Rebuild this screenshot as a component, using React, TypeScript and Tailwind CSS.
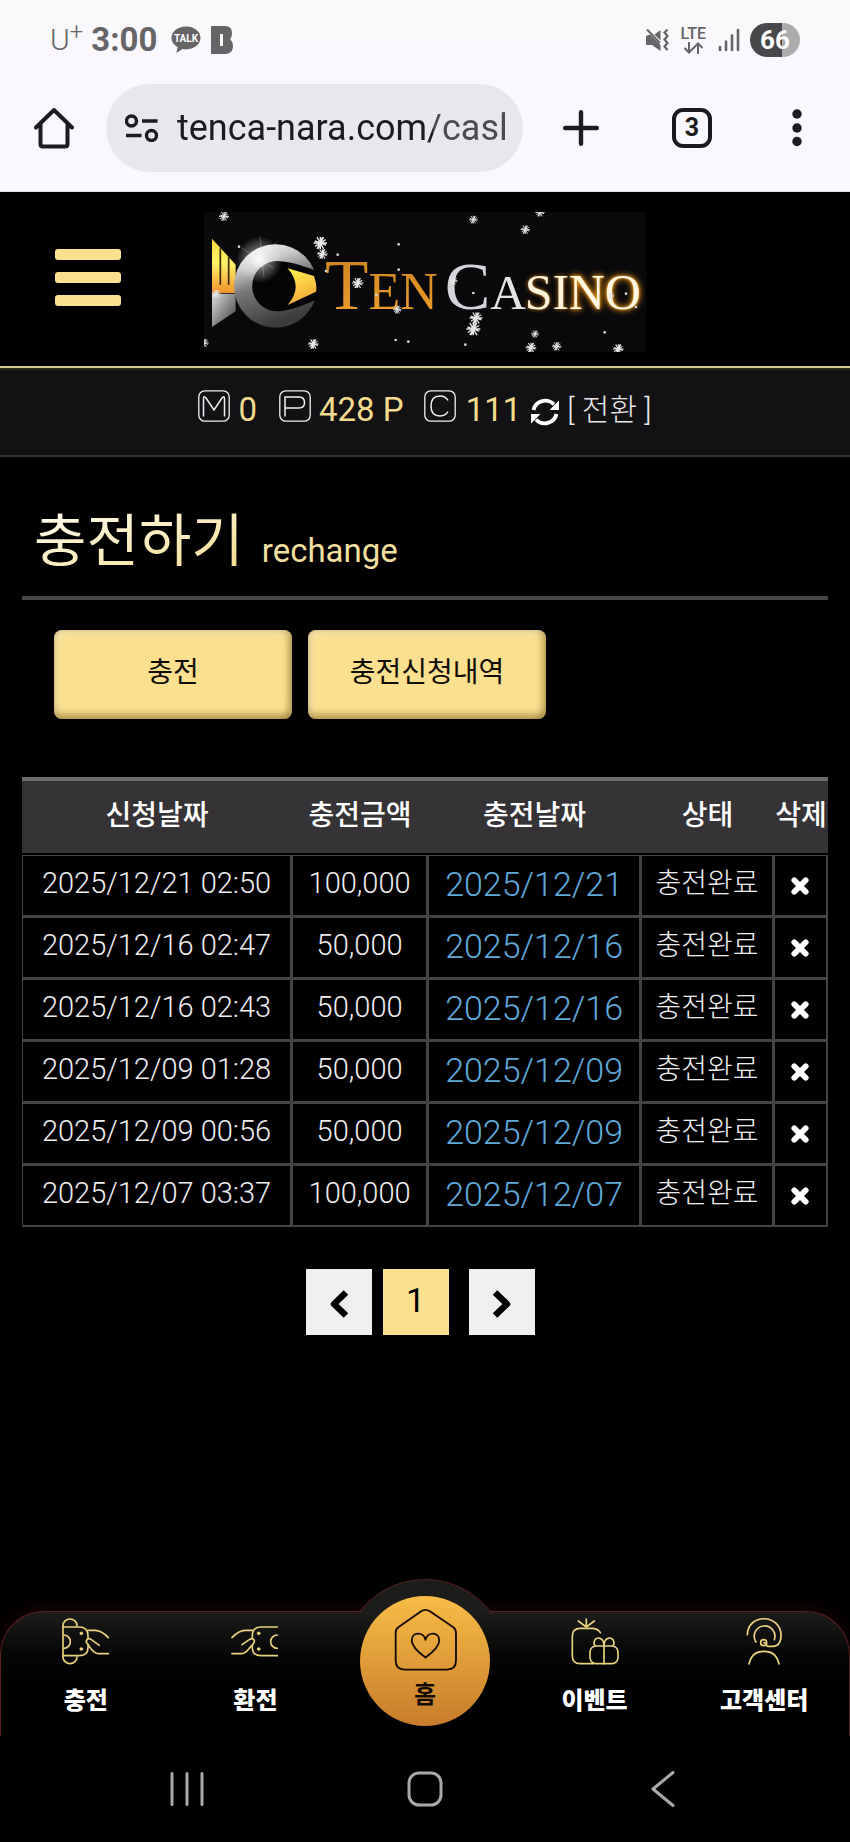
import type { ReactNode } from "react";

const requests = [
  { requested: "2025/12/21 02:50", amount: "100,000", charged: "2025/12/21" },
  { requested: "2025/12/16 02:47", amount: "50,000", charged: "2025/12/16" },
  { requested: "2025/12/16 02:43", amount: "50,000", charged: "2025/12/16" },
  { requested: "2025/12/09 01:28", amount: "50,000", charged: "2025/12/09" },
  { requested: "2025/12/09 00:56", amount: "50,000", charged: "2025/12/09" },
  { requested: "2025/12/07 03:37", amount: "100,000", charged: "2025/12/07" },
];

function StatusBar() {
  return (
    <div className="flex h-[84px] items-center justify-between px-[50px] pb-1 text-[#666467]">
      <div className="flex items-center">
        <span className="flex text-[30px] leading-8 font-light">
          U<span className="-mt-2 text-[24px]">+</span>
        </span>
        <span className="ml-2 text-[33px] leading-8 font-bold">3:00</span>
        <svg viewBox="0 0 30 28" className="ml-3.5 h-7 w-[30px]" role="img" aria-label="Talk">
          <path d="M15 0.5C6.8 .5 .5 5.5 .5 11.8c0 4 2.5 7.3 6.2 9.4L5.4 27l6-3.9c1.200.200 2.400.300 3.600.300 8.200 0 14.500-5.200 14.500-11.600S23.200.5 15 .5z" fill="#666467" />
          <text x="15" y="15.500" textAnchor="middle" fontSize="10" fontWeight="700" fill="#fff" fontFamily="Roboto, sans-serif">TALK</text>
        </svg>
        <svg viewBox="0 0 22 28" className="ml-2.5 h-7 w-[22px]" aria-hidden="true">
          <path d="M0 0h14c5 0 7 3 7 7 0 3-1 5-2 6.500 2 1.500 3 3.500 3 6.500 0 5-3 8-8 8H0zM9 8v12h3V8z" fill="#666467" fillRule="evenodd" />
        </svg>
      </div>
      <div className="flex items-center gap-3">
        <svg viewBox="0 0 24 24" className="size-6" fill="none" aria-hidden="true">
          <path d="M1 9v6.500c0 1 .6 1.500 1.500 1.500H7l8.500 6V17L5 6.500 1 8zM9.500 6.500 15.500 2v10.500z" fill="#666467" />
          <path d="M2 1.500 15 15" stroke="#666467" strokeWidth="2" />
          <path d="M22.500 1.500l-3 3 3 3.500-3 3.500 3 3.500-3 3.500 3 3.500" stroke="#666467" strokeWidth="2.200" />
        </svg>
        <div className="flex flex-col items-center">
          <span className="text-[16px] leading-4 font-medium">LTE</span>
          <svg viewBox="0 0 20 12" className="h-3 w-5" fill="none" stroke="#666467" strokeWidth="2" aria-hidden="true">
            <path d="M6 0v10M1.500 6 6 10.500 10.500 6M15 12V2M10.500 6 15 1.500 19.500 6" />
          </svg>
        </div>
        <svg viewBox="0 0 22 24" className="-mr-0.5 h-6 w-[22px]" stroke="#666467" strokeWidth="2.600" strokeLinecap="round" aria-hidden="true">
          <path d="M2 19v3M8 13.500V22M14 7.500V22M20 2v20" />
        </svg>
        <span className="flex h-[34px] w-[50px] items-center justify-center rounded-full bg-linear-to-r from-[#48474a] from-65% to-[#acabae] to-65% text-[26px] leading-8 font-bold text-white">
          66
        </span>
      </div>
    </div>
  );
}

function BrowserBar() {
  return (
    <div className="flex h-[108px] items-start border-b border-[#dcdbdf] pr-11 pl-[34px] text-[#1c1b20]">
      <button aria-label="Home" className="flex h-[88px] items-center">
        <svg viewBox="0 0 40 42" className="h-[42px] w-10" fill="none" stroke="currentColor" strokeWidth="4" strokeLinejoin="round" strokeLinecap="round">
          <path d="M2 20.500 20 3l18 17.500M6.500 17v20q0 2.500 2.500 2.500h22q2.500 0 2.500-2.500V17" />
        </svg>
      </button>
      <div className="ml-8 flex h-[88px] min-w-0 flex-1 items-center rounded-full bg-[#e9e7ec] pr-3 pl-[19px]">
        <svg viewBox="0 0 34 28" className="h-7 w-[34px] shrink-0" fill="none" stroke="currentColor" strokeWidth="3.400" aria-hidden="true">
          <circle cx="6.500" cy="7" r="5" />
          <circle cx="26.500" cy="21.500" r="5" />
          <path d="M17 7h15.500M1 21.500h15.500" />
        </svg>
        <input
          aria-label="Address"
          readOnly
          value="tenca-nara.com/casl"
          className="ml-[18px] w-full min-w-0 bg-linear-to-r from-[#1c1b20] from-[256px] to-[#4c4b50] to-[256px] bg-clip-text text-[36px] leading-[48px] text-transparent outline-none"
        />
      </div>
      <button aria-label="New tab" className="ml-10 flex h-[88px] items-center">
        <svg viewBox="0 0 36 36" className="size-9" stroke="currentColor" strokeWidth="4.400" strokeLinecap="round">
          <path d="M18 2.200v31.600M2.200 18h31.600" />
        </svg>
      </button>
      <button aria-label="Tabs" className="ml-[73px] flex h-[88px] items-center">
        <span className="flex size-10 items-center justify-center rounded-[11px] border-4 border-[#1c1b20] text-[25px] leading-8 font-bold">3</span>
      </button>
      <button aria-label="More" className="ml-[76px] flex h-[88px] items-center">
        <svg viewBox="0 0 18 38" className="h-[38px] w-[18px]" fill="currentColor">
          <circle cx="9" cy="5" r="4.700" />
          <circle cx="9" cy="19" r="4.700" />
          <circle cx="9" cy="32.500" r="4.700" />
        </svg>
      </button>
    </div>
  );
}

const flakes = [
  [102, 50, 15], [391, 130, 20], [397, 163, 16], [850, 60, 13], [1050, 38, 14], [1006, 90, 14],
  [503, 250, 17], [622, 330, 13], [790, 243, 13], [858, 355, 19], [850, 388, 21], [1035, 403, 12],
  [1023, 444, 16], [1100, 440, 14], [1285, 448, 16], [370, 433, 16], [42, 430, 14], [78, 282, 13], [1262, 288, 11],
];

const sparks = [
  [626, 134], [443, 165], [147, 141], [626, 210], [408, 214], [850, 280], [559, 286],
  [617, 421], [655, 426], [826, 435], [1244, 398], [1308, 282], [1338, 322],
];

function Logo() {
  return (
    <svg viewBox="42 37 1326 420" className="w-[442px]" role="img" aria-label="Ten Casino">
      <defs>
        <linearGradient id="comb" x1="0" y1="0" x2="0" y2="1">
          <stop offset="0" stopColor="#ffd83d" />
          <stop offset=".45" stopColor="#fff36a" />
          <stop offset="1" stopColor="#f0932b" />
        </linearGradient>
        <linearGradient id="ring" x1="0" y1="0" x2=".35" y2="1">
          <stop offset="0" stopColor="#ffffff" />
          <stop offset=".3" stopColor="#c9c9c9" />
          <stop offset=".55" stopColor="#777777" />
          <stop offset=".8" stopColor="#555555" />
          <stop offset="1" stopColor="#3c3c3c" />
        </linearGradient>
        <linearGradient id="fin" x1="0" y1="0" x2="1" y2="1">
          <stop offset="0" stopColor="#dddddd" />
          <stop offset="1" stopColor="#3a3a3a" />
        </linearGradient>
        <linearGradient id="eye" x1="0" y1="0" x2=".3" y2="1">
          <stop offset="0" stopColor="#fff34f" />
          <stop offset="1" stopColor="#f7a93a" />
        </linearGradient>
        <linearGradient id="ten" x1="0" y1="0" x2="0" y2="1">
          <stop offset="0" stopColor="#c9801c" />
          <stop offset="1" stopColor="#f0a22e" />
        </linearGradient>
        <radialGradient id="flare">
          <stop offset="0" stopColor="#ffffff" stopOpacity=".95" />
          <stop offset=".4" stopColor="#ffffff" stopOpacity=".4" />
          <stop offset="1" stopColor="#ffffff" stopOpacity="0" />
        </radialGradient>
        <g id="flake" stroke="#e6e6e6" strokeWidth=".2">
          <path d="M-1 0H1M-.5-.87.5.87M.5-.87-.5.87M-.85-.3.850.3M-.3.85.3-.85M-.8.5.8-.5M0-.9V.9" />
        </g>
      </defs>
      <rect x="42" y="37" width="1326" height="420" fill="#09080b" />
      <path d="M66 117 137 195V280H66z" fill="url(#comb)" />
      <path d="M91 146v110M116 172v84" stroke="#3a2a08" strokeWidth="5" />
      <path d="M66 282H137V335L66 382z" fill="url(#fin)" />
      <circle cx="257" cy="259" r="125" fill="url(#ring)" />
      <path d="M262 184c24 0 70 10 122 32v82c-52 24-98 37-122 37a75 75 0 0 1 0-151z" fill="#050506" />
      <path d="M293 206 372 229q10 30 6 47l-85 40q48-55 0-110z" fill="url(#eye)" />
      <circle cx="208" cy="180" r="70" fill="url(#flare)" />
      <path d="M155 145 250 205M210 110 222 235M180 220 262 125" stroke="#fff" strokeOpacity=".35" strokeWidth="2" />
      <g fontFamily="'Liberation Serif', serif">
        <text x="405" y="327" fill="url(#ten)">
          <tspan fontSize="213">T</tspan>
          <tspan fontSize="156">EN</tspan>
        </text>
        <text x="764" y="329">
          <tspan fontSize="205" fill="#d4d4d8">C</tspan>
          <tspan fontSize="148" fill="#e3e3e6">A</tspan>
        </text>
        <text x="1004" y="329" fontSize="150" fill="#fff3dc" className="[filter:drop-shadow(0_0_6px_#c87a12)]">SI</text>
        <text x="1136" y="329" fontSize="150" fill="#fff6e2" className="[filter:drop-shadow(0_0_5px_#f39a16)_drop-shadow(0_0_10px_#f39a16)]">NO</text>
      </g>
      {flakes.map(([x, y, r]) => (
        <use key={`${x}-${y}`} href="#flake" transform={`translate(${x} ${y}) scale(${r})`} />
      ))}
      {sparks.map(([x, y]) => (
        <circle key={`${x}-${y}`} cx={x} cy={y} r="4" fill="#d8d8d8" />
      ))}
    </svg>
  );
}

function SiteHeader() {
  return (
    <header className="grid h-44 grid-cols-[1fr_auto_1fr] items-start border-b-2 border-[#cfc890] pt-5">
      <button aria-label="메뉴" className="mt-[37px] ml-[55px] flex w-[66px] flex-col gap-3">
        <span className="h-[11px] rounded-[3px] bg-[#fae08f]" />
        <span className="h-[11px] rounded-[3px] bg-[#fae08f]" />
        <span className="h-[11px] rounded-[3px] bg-[#fae08f]" />
      </button>
      <a href="#" aria-label="Ten Casino">
        <Logo />
      </a>
    </header>
  );
}

function LetterBox({ label, d }: { label: string; d: string }) {
  return (
    <svg viewBox="0 0 32 32" className="size-8" fill="none" stroke="#f1f0f2" strokeWidth="1.300" role="img" aria-label={label}>
      <rect x=".8" y=".8" width="30.400" height="30.400" rx="6" />
      <path d={d} strokeWidth="1.500" />
    </svg>
  );
}

function BalanceBar() {
  return (
    <div className="flex h-[89px] items-start justify-center border-t-2 border-b-2 border-t-[#2b2917] border-b-[#333235] bg-[#121114] pt-5 text-[33px] leading-10 text-[#f2db8d]">
      <LetterBox label="M" d="M5.500 26.500V9q0-4 2.500-1l8 12 8-12q2.500-3 2.500 1v17.500" />
      <span className="ml-2">0</span>
      <span className="ml-[22px]">
        <LetterBox label="P" d="M6 26.500V7h14q5.500 0 5.500 5.500T20 18H6" />
      </span>
      <span className="ml-2">428 P</span>
      <span className="ml-5">
        <LetterBox label="C" d="M24 10.500Q21.500 6 16 6q-9 0-9 10t9 10q5.500 0 8-4.500" />
      </span>
      <span className="ml-2.5">111</span>
      <button aria-label="새로고침" className="mt-2 ml-2.5">
        <svg viewBox="0 0 28 28" className="size-7" fill="none" stroke="#fff" strokeWidth="3.800">
          <path d="M2.500 12A12 12 0 0 1 23 6.500M25.500 16A12 12 0 0 1 5 21.500" />
          <path d="M28 2.500V12h-9.500zM0 25.500V16h9.500z" fill="#fff" stroke="none" />
        </svg>
      </button>
      <button className="ml-2 text-[30px] leading-10 font-light text-[#e6e5e8]">[ 전환 ]</button>
    </div>
  );
}

function ActionButton({ children }: { children: ReactNode }) {
  return (
    <button className="h-[89px] max-w-[238px] flex-1 rounded-lg bg-[#fae08f] pb-1 text-[28px] text-[#120c06] shadow-[inset_0_-5px_7px_rgba(120,90,30,0.45),inset_-4px_0_7px_rgba(120,90,30,0.35),inset_3px_4px_6px_rgba(255,255,255,0.35)]">
      {children}
    </button>
  );
}

const cell = "border-t border-r-2 border-b-2 border-l border-[#454346] p-0 pb-1";

function RequestTable() {
  return (
    <table className="mt-[58px] w-full table-fixed border-separate border-spacing-0 text-center text-[28px] font-light whitespace-nowrap text-[#eeedf0]">
      <colgroup>
        <col className="w-[33.500%]" />
        <col className="w-[16.900%]" />
        <col className="w-[26.400%]" />
        <col className="w-[16.500%]" />
        <col />
      </colgroup>
      <thead>
        <tr className="h-[78px] text-white">
          {["신청날짜", "충전금액", "충전날짜", "상태", "삭제"].map((name) => (
            <th key={name} className="border-t-4 border-b-2 border-t-[#6b6a6c] border-b-black bg-[#353336] bg-clip-padding p-0 pb-0.5 font-medium">
              {name}
            </th>
          ))}
        </tr>
      </thead>
      <tbody>
        {requests.map((row) => (
          <tr key={row.requested} className="h-[62px]">
            <td className={`${cell} text-[29px]`}>{row.requested}</td>
            <td className={`${cell} text-[29px]`}>{row.amount}</td>
            <td className={`${cell} text-[34px] leading-10 text-[#5fa8d8]`}>{row.charged}</td>
            <td className={cell}>충전완료</td>
            <td className={cell}>
              <button aria-label="삭제" className="mt-1 flex w-full justify-center">
                <svg viewBox="0 0 18 18" className="size-[18px]" stroke="#fff" strokeWidth="5.800" strokeLinecap="round">
                  <path d="M3.300 3.300 14.700 14.700M14.700 3.300 3.300 14.700" />
                </svg>
              </button>
            </td>
          </tr>
        ))}
      </tbody>
    </table>
  );
}

function Chevron({ d }: { d: string }) {
  return (
    <svg viewBox="0 0 20 30" className="h-[30px] w-5" fill="none" stroke="currentColor" strokeWidth="6.500" strokeLinejoin="round">
      <path d={d} />
    </svg>
  );
}

function Pagination() {
  return (
    <nav aria-label="페이지" className="mt-[42px] flex justify-center pr-2.5 text-black">
      <button aria-label="이전" className="flex size-[66px] items-center justify-center bg-[#f0eef0] pt-1">
        <Chevron d="M17 3.500 5 15l12 11.500" />
      </button>
      <button aria-current="page" className="ml-[11px] size-[66px] bg-[#fae08f] pb-1 text-[34px]">
        1
      </button>
      <button aria-label="다음" className="ml-5 flex size-[66px] items-center justify-center bg-[#f0eef0] pt-1">
        <Chevron d="M3 3.500 15 15 3 26.500" />
      </button>
    </nav>
  );
}

function NavItem({ label, viewBox, children }: { label: string; viewBox: string; children: ReactNode }) {
  return (
    <a href="#" className="flex flex-1 flex-col items-center gap-5 pt-[5px]">
      <svg viewBox={viewBox} className="size-12" fill="none" stroke="#e8d27e" strokeWidth="5" strokeLinecap="round" strokeLinejoin="round" aria-hidden="true">
        {children}
      </svg>
      <span className="text-[24px] leading-8 font-black text-white">{label}</span>
    </a>
  );
}

function BottomNav() {
  return (
    <nav aria-label="하단 메뉴" className="relative flex h-[125px] rounded-t-[44px] border border-b-0 border-[#5a2020] bg-linear-to-b from-[#1c1d1b] to-black to-75% shadow-[0_-4px_14px_rgba(90,10,10,0.25)]">
      <NavItem label="충전" viewBox="185 140 144 144">
        <path d="M188 262V166a21 20 0 0 1 42 0M188 260a21 20 0 0 0 42 0" />
        <path d="M188 170h48q27 0 27 26v8M263 226v6q0 24-27 24h-48M190 194a20 20 0 0 1 0 40" />
        <path d="M262 180h22q20 0 40 22M297 225l-24-17c-12-8-20 4-11 13l6 9q14 20 26 20h30" />
        <g fill="#e8d27e" strokeWidth="3">
          <circle cx="243" cy="189" r="4" />
          <circle cx="243" cy="236" r="4" />
        </g>
      </NavItem>
      <NavItem label="환전" viewBox="694 140 144 144">
        <path d="M833 170h-48q-27 0-27 26v8M758 226v6q0 24 27 24h48M833 194a20 20 0 1 0 0 40" />
        <path d="M759 180h-22q-20 0-40 22M727 223l22-15c12-8 20 4 11 13l-12 14q-12 15-24 15h-27" />
        <g fill="#e8d27e" strokeWidth="3">
          <circle cx="777" cy="189" r="4" />
          <circle cx="777" cy="236" r="4" />
        </g>
      </NavItem>
      <div className="flex-1" />
      <NavItem label="이벤트" viewBox="183 140 144 144">
        <path d="M229 170v-24M205 152l24 18 24-18" />
        <path d="M250 280h-40q-23 0-23-23v-60q0-23 23-23h36q18 0 25 13" />
        <rect x="240" y="227" width="84" height="53" rx="18" />
        <path d="M282 227v53M282 227c0-30-28-30-30-10q0 6 4 10M282 227c0-30 28-30 30-10q0 6-4 10" />
      </NavItem>
      <NavItem label="고객센터" viewBox="693 140 144 144">
        <path d="M715 193c2-66 101-62 101 2 0 20-8 33-24 33h-16c-4 0-4-11-11-11" />
        <path d="M741 215a31 31 0 1 1 55-7" />
        <circle cx="764" cy="217" r="9" />
        <path d="M720 281q8-38 45-38t45 38" />
      </NavItem>

      <div className="absolute -top-[33px] left-1/2 h-[35px] w-[136px] -translate-x-1/2 overflow-hidden">
        <div className="-ml-[15px] size-[166px] rounded-full border border-[#5a2020] bg-[#1c1d1b]" />
      </div>
      <a href="#" className="absolute -top-4 left-1/2 flex size-[130px] -translate-x-1/2 flex-col items-center rounded-full bg-linear-to-b from-[#f8bd47] to-[#c77c2b] pt-3 text-[#140a04]">
        <svg viewBox="161 143 188 188" className="size-[63px]" fill="none" stroke="currentColor" strokeWidth="5.500" strokeLinejoin="round" aria-hidden="true">
          <path d="M166 218q0-12 9-18l67-47q13-9 26 0l69 47q9 6 9 18v82q0 27-27 27H193q-27 0-27-27z" />
          <path d="M255 238c-6-26-41-24-41 2 0 18 22 37 41 51 19-14 41-33 41-51 0-26-35-28-41-2z" />
        </svg>
        <span className="mt-2 text-[24px] leading-8 font-bold">홈</span>
      </a>
    </nav>
  );
}

function SystemBar() {
  return (
    <div className="grid h-[106px] grid-cols-3 place-items-center bg-black px-[68px] text-[#a9a8ab]">
      <button aria-label="Recent apps">
        <svg viewBox="0 0 36 36" className="size-9" stroke="currentColor" strokeWidth="3" strokeLinecap="round">
          <path d="M3 2.500v31M18 2.500v31M33 2.500v31" />
        </svg>
      </button>
      <button aria-label="Home screen">
        <svg viewBox="0 0 36 36" className="size-9" fill="none" stroke="currentColor" strokeWidth="3">
          <rect x="2" y="2" width="32" height="32" rx="10" />
        </svg>
      </button>
      <button aria-label="Back">
        <svg viewBox="0 0 36 36" className="size-9" fill="none" stroke="currentColor" strokeWidth="3" strokeLinecap="round" strokeLinejoin="round">
          <path d="M28 1.500 8 18l20 16.500" />
        </svg>
      </button>
    </div>
  );
}

export default function App() {
  return (
    <div className="flex min-h-screen flex-col bg-black font-[Roboto,'Noto_Sans_CJK_KR',sans-serif]">
      <div className="bg-linear-to-b from-[#f8f8f8] to-[#faf8fd] to-30%">
        <StatusBar />
        <BrowserBar />
      </div>
      <SiteHeader />
      <BalanceBar />
      <main className="flex-1 px-[22px]">
        <h1 className="flex h-[143px] items-end border-b-4 border-[#454446] pb-[22px] pl-3">
          <span className="bg-linear-to-br from-[#fffdf0] to-[#f3da88] bg-clip-text text-[57px] leading-[64px] text-transparent">충전하기</span>
          <span className="ml-[18px] text-[33px] leading-[46px] text-[#f0df9f]">rechange</span>
        </h1>
        <div className="mt-[30px] flex gap-4 px-8">
          <ActionButton>충전</ActionButton>
          <ActionButton>충전신청내역</ActionButton>
        </div>
        <RequestTable />
        <Pagination />
      </main>
      <BottomNav />
      <SystemBar />
    </div>
  );
}
